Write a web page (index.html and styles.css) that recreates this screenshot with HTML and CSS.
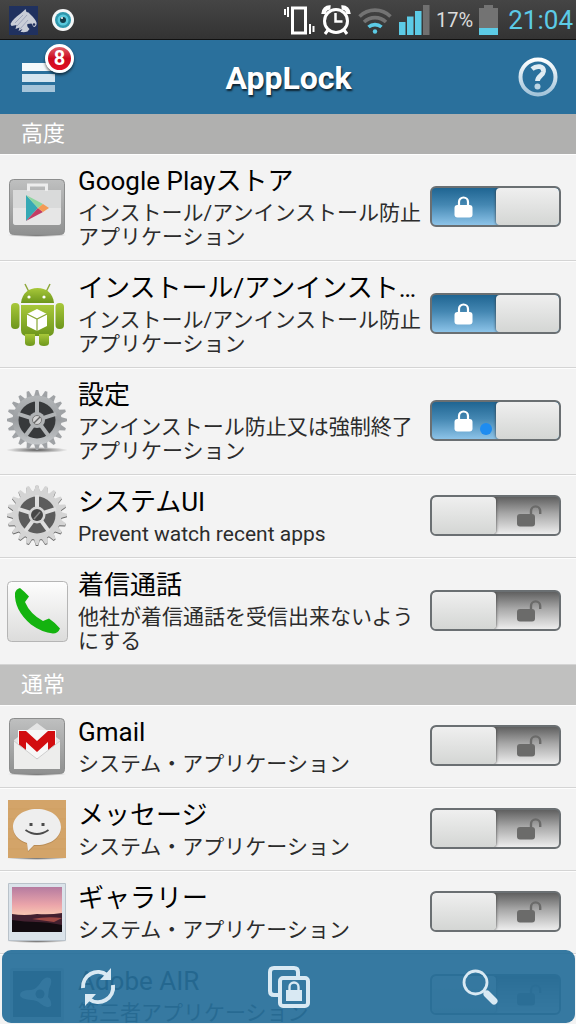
FILE: index.html
```html
<!DOCTYPE html>
<html lang="ja">
<head>
<meta charset="utf-8">
<meta name="viewport" content="width=device-width, initial-scale=1">
<title>AppLock</title>
<link rel="stylesheet" href="styles.css">
</head>
<body>
<svg class="defs" aria-hidden="true">
  <defs>
    <linearGradient id="g-box" x2="0" y2="1"><stop offset="0" stop-color="#bfc0c0"/><stop offset="1" stop-color="#8f9090"/></linearGradient>
    <linearGradient id="g-paper" x2="0" y2="1"><stop offset="0" stop-color="#fdfdfd"/><stop offset="1" stop-color="#dcdcdb"/></linearGradient>
    <linearGradient id="g-ice" x2="0" y2="1"><stop offset="0" stop-color="#fff"/><stop offset="1" stop-color="#a3c4da"/></linearGradient>
    <linearGradient id="g-green" x2="0" y2="1"><stop offset="0" stop-color="#a8c83a"/><stop offset="1" stop-color="#6d961c"/></linearGradient>
    <linearGradient id="g-sky" x2="0" y2="1"><stop offset="0" stop-color="#b57ba0"/><stop offset=".4" stop-color="#eba5aa"/><stop offset=".6" stop-color="#f7c3b0"/></linearGradient>
    <radialGradient id="g-shadow"><stop offset="0" stop-color="#333" stop-opacity=".8"/><stop offset="1" stop-color="#333" stop-opacity="0"/></radialGradient>
    <linearGradient id="g-gear" gradientUnits="userSpaceOnUse" x1="0" x2="0" y1="-25" y2="25"><stop offset="0" stop-color="#b4b7b9"/><stop offset=".5" stop-color="#9b9ea1"/><stop offset="1" stop-color="#c6c9cb"/></linearGradient>
    <g id="tooth"><path d="M-3.200-23 -1.200-30H1.200L3.200-23Z"/></g>
    <g id="teeth5"><use href="#tooth"/><use href="#tooth" transform="rotate(18)"/><use href="#tooth" transform="rotate(36)"/><use href="#tooth" transform="rotate(54)"/><use href="#tooth" transform="rotate(72)"/></g>
    <g id="teeth"><use href="#teeth5"/><use href="#teeth5" transform="rotate(90)"/><use href="#teeth5" transform="rotate(180)"/><use href="#teeth5" transform="rotate(270)"/></g>
    <g id="spokes"><path d="M0-6V-20"/><path d="M0-6V-20" transform="rotate(72)"/><path d="M0-6V-20" transform="rotate(144)"/><path d="M0-6V-20" transform="rotate(216)"/><path d="M0-6V-20" transform="rotate(288)"/></g>
    <symbol id="locked" viewBox="0 0 18 22"><path d="M4.500 10V6a4.500 4.500 0 0 1 9 0v4" fill="none" stroke="currentColor" stroke-width="2.200"/><rect y="9" width="18" height="12.500" rx="3" fill="currentColor"/></symbol>
    <symbol id="unlocked" viewBox="0 0 25 22"><path d="M14 10V6a4.600 4.600 0 0 1 9.200 0v3" fill="none" stroke="currentColor" stroke-width="2.400"/><rect y="9" width="18" height="12.500" rx="3" fill="currentColor"/></symbol>
  </defs>
</svg>

<div class="app">
  <div class="status">
    <svg class="status-icon" width="29" height="29" viewBox="0 0 29 29" aria-hidden="true">
      <rect width="29" height="29" fill="#20315f"/>
      <path d="M1.500 18C3 14 7 11 11 8c2-2 4-3 5.500-5l1 3 2 .5 3 3c2 2 4 4 5 7 .5 2-.5 4-2 4.500-1.500 0-2-2-3-3.500l-4 .5c-1 2 1 4 2 5l-2 2.500c-3 1-5 .5-7 .5l2-3-4 2 1-3.500-4 1.500 1-4-5 1Z" fill="#c9cdd7"/>
      <path d="m6 17 8-8m-6 11L18 9m-7 14 8-9" stroke="#8d95b0" stroke-width=".7"/><circle cx="25" cy="18.500" r="1.300" fill="#20315f"/>
    </svg>
    <svg class="status-icon" width="22" height="22" viewBox="0 0 22 22" aria-hidden="true"><circle cx="11" cy="11" r="11" fill="#f4f6f7"/><circle cx="11" cy="11" r="8" fill="#2e97ad"/><circle cx="11" cy="11" r="5.500" fill="#58c8dc"/><circle cx="11" cy="11" r="3" fill="#123c4a"/><circle cx="10" cy="9" r="1" fill="#fff"/></svg>
    <div class="status-right">
      <svg width="31" height="30" viewBox="0 0 31 30" fill="none" stroke="#fff" aria-hidden="true"><path d="M8.500 3h13v25h-13Z" stroke-width="3"/><path d="M4 2v10M1 4v6M26 19v10M29.500 21v6" stroke-width="2"/></svg>
      <svg width="30" height="30" viewBox="0 0 30 30" fill="none" stroke="#fff" aria-hidden="true"><circle cx="15" cy="16" r="11.500" stroke-width="3"/><path d="M14.500 8v8.500h7" stroke-width="2.500"/><path d="M2.500 9c0-4 3-7 7-6.500M27.500 9c0-4-3-7-7-6.500" stroke-width="4.500"/><path d="m7 25-3 4M23 25l3 4" stroke-width="3"/></svg>
      <svg width="36" height="30" viewBox="0 0 36 30" fill="none" stroke-width="3.600" aria-hidden="true"><path d="M2.500 11.500a22 22 0 0 1 31 0M7 17a16 16 0 0 1 22 0" stroke="#737373"/><path d="M11.500 22a10 10 0 0 1 13 0" stroke="#5ccbe6"/><circle cx="18" cy="26.500" r="2.200" fill="#5ccbe6"/></svg>
      <svg width="31" height="30" viewBox="0 0 31 30" fill="#5ccbe6" aria-hidden="true"><path d="M0 17h6.500v13H0ZM8 11.500h6.500V30H8ZM16 6h6.500v24H16Z"/><path d="M24 0h6.500v30H24Z" fill="#707070"/></svg>
      <span class="battery-text">17%</span>
      <svg width="19" height="30" viewBox="0 0 19 30" aria-hidden="true"><path d="M5 0h9v3h5v20H0V3h5Z" fill="#737373"/><path d="M0 23h19v7H0Z" fill="#5ccbe6"/></svg>
      <time class="clock">21:04</time>
    </div>
  </div>

  <header class="header">
    <button class="menu" aria-label="メニュー 8">
      <svg width="34" height="31" viewBox="0 0 34 31" aria-hidden="true"><path d="M0 1h33v8H0Z" fill="#f4f9fb"/><path d="M0 12h33v8H0Z" fill="#d5e5ef"/><path d="M0 23h33v7H0Z" fill="#a5c4d9"/></svg>
      <span class="badge">8</span>
    </button>
    <h1 class="title">AppLock</h1>
    <button class="help" aria-label="ヘルプ">
      <svg width="40" height="40" viewBox="0 0 40 40" fill="none" aria-hidden="true"><circle cx="20" cy="20" r="17.500" stroke="url(#g-ice)" stroke-width="4"/><path d="M14 12c5-4 12-3 11.500 2.500-.5 4-6 4.500-6 9.500" stroke="#e0ecf3" stroke-width="4.800"/><circle cx="19.500" cy="29.500" r="3" fill="#bcd5e4"/></svg>
    </button>
  </header>

  <main class="list">
    <h2 class="section">高度</h2>
    <ul class="rows">
      <li class="row">
        <svg class="icon" viewBox="0 0 60 60" aria-hidden="true"><ellipse cx="30" cy="58" rx="30" ry="2" fill="url(#g-shadow)"/><rect x="2.500" y="2.500" width="55" height="55" rx="4" fill="url(#g-box)" stroke="#8c8d8d"/><path d="M6 13h48v32q0 3-3 3H9q-3 0-3-3Z" fill="#d9dada"/><path d="M6 31h48v14q0 3-3 3H9q-3 0-3-3Z" fill="#e6e6e6"/><path d="M21.500 14V8h18v6" fill="none" stroke="#ededed" stroke-width="3"/><path d="M19 18v26l12-13Z" fill="#36a9b5"/><path d="m19 18 17 9-5 4Z" fill="#8ed6a0"/><path d="m19 44 17-9-5-4Z" fill="#c33d64"/><path d="m36 27 6 4-6 4-5-4Z" fill="#f49a54"/></svg>
        <div class="text"><h3 class="name">Google Playストア</h3><p class="desc">インストール/アンインストール防止アプリケーション</p></div>
        <label class="switch"><input type="checkbox" role="switch" checked aria-label="Google Playストア"><svg class="lock"><use href="#locked"/></svg></label>
      </li>
      <li class="row">
        <svg class="icon" viewBox="0 0 60 60" aria-hidden="true"><path d="m18 0 4 8M43 0l-4 8" stroke="#8fa83c" stroke-width="1.500"/><g fill="url(#g-green)"><path d="M14 19C15 9 22 4 30.500 4S46 9 47 19Z"/><path d="M14 21h33v25q0 6-6 6H20q-6 0-6-6Z"/><rect x="4" y="19" width="8.500" height="26" rx="4"/><rect x="48.500" y="19" width="8.500" height="26" rx="4"/><path d="M18 50h10v9q0 3-5 3t-5-3ZM32 50h10v9q0 3-5 3t-5-3Z"/></g><circle cx="22" cy="13" r="1.600" fill="#fff"/><circle cx="37" cy="13" r="1.600" fill="#fff"/><path d="m30 25 10 5v12l-10 5-10-5V30Z" fill="#fff"/><path d="m20 30 10 5 10-5M30 35v12" fill="none" stroke="#88a735" stroke-width="1.200"/></svg>
        <div class="text"><h3 class="name">インストール/アンインスト…</h3><p class="desc">インストール/アンインストール防止アプリケーション</p></div>
        <label class="switch"><input type="checkbox" role="switch" checked aria-label="インストール/アンインスト…"><svg class="lock"><use href="#locked"/></svg></label>
      </li>
      <li class="row">
        <svg class="icon" viewBox="0 0 60 60" aria-hidden="true"><ellipse cx="30" cy="59" rx="31" ry="3" fill="url(#g-shadow)"/><g transform="translate(30 29)"><g fill="#9fa2a5"><use href="#teeth"/></g><circle r="24.500" fill="url(#g-gear)"/><circle r="18.500" fill="#37393b"/><g stroke="#b0b3b5" stroke-width="4"><use href="#spokes"/></g><circle r="8" fill="#b0b3b5"/><circle r="4.500" fill="#d4d4d4" stroke="#777"/><path d="m-3 3 6-6" stroke="#666" stroke-width="1.500"/></g></svg>
        <div class="text"><h3 class="name">設定</h3><p class="desc">アンインストール防止又は強制終了アプリケーション</p></div>
        <label class="switch"><input type="checkbox" role="switch" checked aria-label="設定"><svg class="lock"><use href="#locked"/></svg><span class="touch"></span></label>
      </li>
      <li class="row">
        <svg class="icon" viewBox="0 0 60 60" aria-hidden="true"><g transform="translate(30 29)"><g fill="#666" transform="translate(0 1)"><use href="#teeth"/><circle r="24.500"/></g><g fill="#d4d4d4"><use href="#teeth"/></g><circle r="24.500" fill="#d4d4d4"/><circle r="18.500" fill="#5c5c5c"/><g stroke="#dedede" stroke-width="4"><use href="#spokes"/></g><circle r="8.500" fill="#d6d6d6"/><circle r="6" fill="#484848"/><path d="m-3 4 6-7" stroke="#888" stroke-width="1.500"/></g></svg>
        <div class="text"><h3 class="name">システムUI</h3><p class="desc">Prevent watch recent apps</p></div>
        <label class="switch"><input type="checkbox" role="switch" aria-label="システムUI"><svg class="lock"><use href="#unlocked"/></svg></label>
      </li>
      <li class="row">
        <svg class="icon" viewBox="0 0 60 60" aria-hidden="true"><rect x=".5" y=".5" width="60" height="60" rx="4" fill="url(#g-paper)" stroke="#b5b5b5"/><path d="M8 12q1-4 5-5 5 4 9 8.500L18 21q5 12 18 19l6-2.500q6 4 11 10-2 5-7 5-11-1-22-9Q7 29 8 12Z" fill="#14b30f"/></svg>
        <div class="text"><h3 class="name">着信通話</h3><p class="desc">他社が着信通話を受信出来ないようにする</p></div>
        <label class="switch"><input type="checkbox" role="switch" aria-label="着信通話"><svg class="lock"><use href="#unlocked"/></svg></label>
      </li>
    </ul>

    <h2 class="section section-light">通常</h2>
    <ul class="rows">
      <li class="row">
        <svg class="icon" viewBox="0 0 60 60" aria-hidden="true"><ellipse cx="30" cy="58" rx="30" ry="2" fill="url(#g-shadow)"/><rect x="2.500" y="2.500" width="55" height="55" rx="4" fill="url(#g-box)" stroke="#8c8d8d"/><path d="m7 24 23-17 23 17v10H7Z" fill="#e4e4e4"/><path d="M11 14h38v28H11Z" fill="#f7f7f7"/><path d="M12 34V15h7l11 10 11-10h7v19h-7v-8L30 36 19 26v8Z" fill="#d20d10"/><path d="m7 25 23 18 23-18v28H7Z" fill="#ededec"/><path d="m7 25 23 18 23-18" fill="none" stroke="#cfcfcf"/></svg>
        <div class="text"><h3 class="name">Gmail</h3><p class="desc">システム・アプリケーション</p></div>
        <label class="switch"><input type="checkbox" role="switch" aria-label="Gmail"><svg class="lock"><use href="#unlocked"/></svg></label>
      </li>
      <li class="row">
        <svg class="icon" viewBox="0 0 60 60" aria-hidden="true"><ellipse cx="30" cy="59" rx="31" ry="2" fill="url(#g-shadow)"/><path d="M1 1h58v58H1Z" fill="#d3a469"/><path d="M1 10h58M1 20h58M1 30h58M1 40h58M1 50h58" stroke="#cf9f63"/><path d="M30 11c14 0 24 8 24 18S44 47 30 47h-3l-6 6-1-8C11 42 6 36 6 29c0-10 10-18 24-18Z" fill="#a77c48" opacity=".6"/><path d="M30 10c14 0 24 8 24 18S44 46 30 46h-3l-6 6-1-8C11 41 6 35 6 28c0-10 10-18 24-18Z" fill="#eee"/><path d="M22.500 24h3v3h-3ZM34.500 24h3v3h-3Z" fill="#4b4b4b"/><path d="M18.500 31q11.500 8 23 0" fill="none" stroke="#4b4b4b" stroke-width="1.800"/></svg>
        <div class="text"><h3 class="name">メッセージ</h3><p class="desc">システム・アプリケーション</p></div>
        <label class="switch"><input type="checkbox" role="switch" aria-label="メッセージ"><svg class="lock"><use href="#unlocked"/></svg></label>
      </li>
      <li class="row">
        <svg class="icon" viewBox="0 0 60 60" aria-hidden="true"><ellipse cx="30" cy="59" rx="31" ry="2" fill="url(#g-shadow)"/><path d="M1.500 1.500h57v57h-57Z" fill="#dbe3ea" stroke="#b9c2ca"/><path d="M5 5h50v45H5Z" fill="url(#g-sky)"/><path d="M5 32q12 2 25 0 13 1 25-1v19H5Z" fill="#42202f"/><path d="M25 37q15-3 30-1l-8 4Z" fill="#a04a45"/><path d="M5 38q13 2 24 2t26 3v7H5Z" fill="#120b10"/></svg>
        <div class="text"><h3 class="name">ギャラリー</h3><p class="desc">システム・アプリケーション</p></div>
        <label class="switch"><input type="checkbox" role="switch" aria-label="ギャラリー"><svg class="lock"><use href="#unlocked"/></svg></label>
      </li>
      <li class="row">
        <svg class="icon" viewBox="0 0 60 60" aria-hidden="true"><rect x="3" y="3" width="54" height="54" rx="3" fill="#ccc"/><path d="M6 6h48v46H6Z" fill="#444"/><path d="M34 17q4-6 9-4 3 3-1 11l-1 8q4 4 3 9-4 3-10-2-4-4-10-4-11-1-11-5 0-5 11-5 6-1 10-8Z" fill="#ddd"/><circle cx="33" cy="29" r="4.500" fill="#444"/></svg>
        <div class="text"><h3 class="name">Adobe AIR</h3><p class="desc">第三者アプリケーション</p></div>
        <label class="switch"><input type="checkbox" role="switch" aria-label="Adobe AIR"><svg class="lock"><use href="#unlocked"/></svg></label>
      </li>
    </ul>
  </main>

  <nav class="toolbar">
    <button class="tool" aria-label="更新"><svg width="36" height="38" viewBox="0 0 36 38" aria-hidden="true"><g fill="none" stroke="#d9e9f3" stroke-width="4"><path d="M3 20A15 15 0 0 1 27 7"/><path d="M33 17A15 15 0 0 1 9 31"/></g><path d="M31 0v12H20ZM5 38V26h11Z" fill="#d9e9f3"/></svg></button>
    <button class="tool" aria-label="ロック"><svg width="42" height="42" viewBox="0 0 42 42" aria-hidden="true"><path d="M10 29H6q-4 0-4-4V6q0-4 4-4h20q4 0 4 4v4" fill="none" stroke="#d9e9f3" stroke-width="4"/><rect x="12" y="12" width="28" height="28" rx="3" fill="none" stroke="#d9e9f3" stroke-width="4"/><path d="M21.500 25v-4a4.500 4.500 0 0 1 9 0v4" fill="none" stroke="#d9e9f3" stroke-width="2.400"/><path d="M18 24h16v11H18Z" fill="#d9e9f3"/></svg></button>
    <button class="tool" aria-label="検索"><svg width="36" height="38" viewBox="0 0 36 38" aria-hidden="true"><circle cx="13.500" cy="14.500" r="11.500" fill="none" stroke="#d9e9f3" stroke-width="2.800"/><path d="m21 22 4 4" stroke="#d9e9f3" stroke-width="3"/><path d="m25 26 7 7" stroke="#d9e9f3" stroke-width="7" stroke-linecap="round"/></svg></button>
  </nav>
</div>
</body>
</html>
```
FILE: styles.css
```css
* {
  box-sizing: border-box;
}

body {
  margin: 0;
  background: #f3f3f3;
  font-family: Roboto, "Noto Sans CJK JP", sans-serif;
}

h1, h2, h3, p, ul {
  margin: 0;
  padding: 0;
  font-weight: 400;
}

button {
  border: 0;
  padding: 0;
  background: none;
  font: inherit;
}

svg {
  display: block;
  flex: none;
}

.defs {
  position: absolute;
  width: 0;
  height: 0;
}

.app {
  position: relative;
  display: flex;
  flex-direction: column;
  height: 100vh;
  overflow: hidden;
}

/* Status bar */
.status {
  display: flex;
  flex: none;
  align-items: center;
  gap: 14px;
  height: 40px;
  padding: 1px 3px 0 9px;
  background: linear-gradient(#454545, #333);
  border-bottom: 1px solid #111;
}

.status-right {
  display: flex;
  align-items: center;
  gap: 6px;
  margin-left: auto;
}

.battery-text {
  color: #dcdcdc;
  font-size: 20px;
}

.clock {
  margin-left: 4px;
  color: #5ccbe6;
  font-size: 26px;
}

/* Title bar */
.header {
  display: flex;
  flex: none;
  align-items: center;
  justify-content: space-between;
  height: 74px;
  padding: 0 18px 0 22px;
  background: #2a709c;
}

.menu {
  position: relative;
}

.badge {
  position: absolute;
  top: -18px;
  left: 23px;
  width: 29px;
  height: 29px;
  border: 3px solid #fff;
  border-radius: 50%;
  background: linear-gradient(#e0606a, #cc0a1e 50%, #e01025);
  box-shadow: 0 2px 3px rgba(0, 0, 0, .6);
  color: #fff;
  font-size: 20px;
  font-weight: 700;
  line-height: 23px;
  text-align: center;
}

.title {
  padding: 2px 0 0 3px;
  color: #fff;
  font-size: 32px;
  font-weight: 700;
  text-shadow: 1px 2px 2px rgba(0, 0, 0, .7);
}

/* List */
.list {
  flex: 1;
  min-height: 0;
  overflow: hidden;
}

.section {
  padding: 0 21px;
  background: #b0b0af;
  color: #fff;
  font-size: 22px;
  line-height: 40px;
}

.section-light {
  background: #c0c0bf;
}

.rows {
  list-style: none;
}

.row {
  display: flex;
  align-items: center;
  padding: 10px 15px 11px 7px;
  border-bottom: 1px solid #d4d4d4;
  background: #f3f3f3;
  box-shadow: inset 0 1px #fdfdfd;
}

.icon {
  width: 60px;
  height: 60px;
  margin-right: 11px;
  overflow: visible;
}

.text {
  flex: 1;
  min-width: 0;
  margin-right: 4px;
}

.name {
  overflow: hidden;
  color: #000;
  font-size: 26px;
  line-height: 35px;
  text-overflow: ellipsis;
  white-space: nowrap;
}

.desc {
  margin-top: 2px;
  color: #2c2c2c;
  font-size: 21px;
  line-height: 24px;
}

/* Lock switch */
.switch {
  position: relative;
  display: grid;
  flex: none;
  grid-template-columns: 1fr 1fr;
  width: 131px;
  height: 41px;
  overflow: hidden;
  border: 2px solid #6a6f72;
  border-radius: 6px;
  background: linear-gradient(#606060, #a8a8a8 45%, #ededed);
}

.switch:has(:checked) {
  background: linear-gradient(#1f6592, #4487b2 45%, #8cc3e8);
}

.switch input {
  grid-row: 1;
  grid-column: 1;
  margin: 0;
  appearance: none;
  border-radius: 4px;
  background: linear-gradient(#efefef, #d4d6d4);
  box-shadow: 0 0 3px #333;
}

.switch input:checked {
  grid-column: 2;
}

.lock {
  grid-row: 1;
  grid-column: 2;
  place-self: center;
  width: 25px;
  height: 22px;
  margin-left: 4px;
  color: #6b6b6a;
}

.switch:has(:checked) .lock {
  grid-column: 1;
  margin-left: 0;
  color: #fff;
}

.touch {
  position: absolute;
  right: 67px;
  bottom: 4px;
  width: 12px;
  height: 12px;
  border-radius: 50%;
  background: #1e8cf0;
}

/* Bottom toolbar */
.toolbar {
  position: absolute;
  right: 1px;
  bottom: 1px;
  left: 2px;
  display: grid;
  grid-template-columns: repeat(3, 1fr);
  height: 73px;
  border-radius: 9px;
  background: rgba(39, 111, 154, .93);
}

.tool {
  display: grid;
  place-items: center;
}
```
